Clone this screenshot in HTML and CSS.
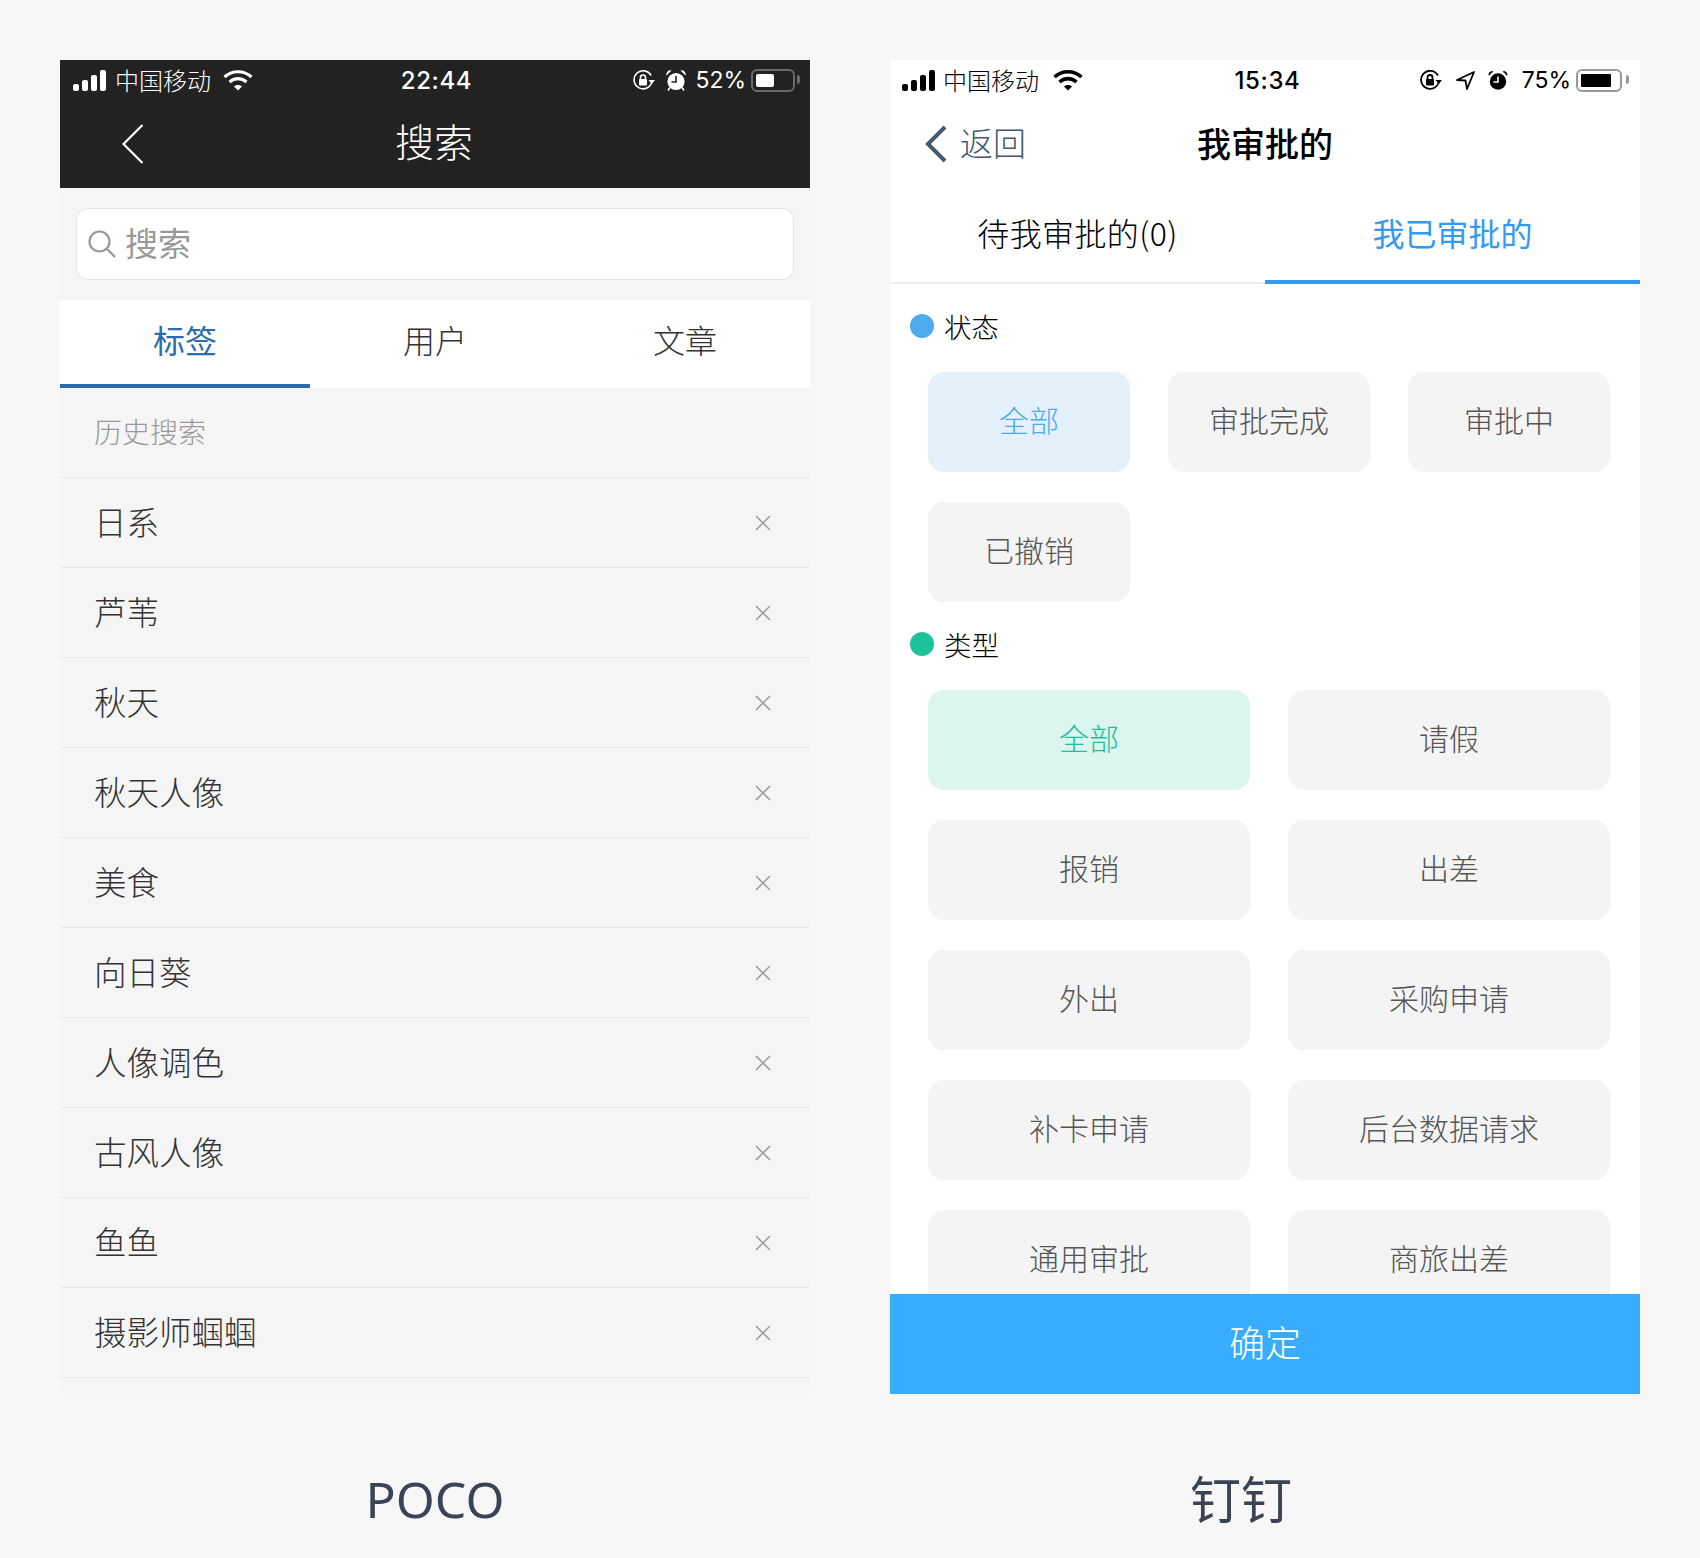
FILE: index.html
```html
<!DOCTYPE html>
<html lang="zh-CN">
<head>
    <meta charset="UTF-8">
    <meta name="viewport" content="width=device-width, initial-scale=1.0">
    <title>POCO / 钉钉</title>
    <link rel="stylesheet" href="styles.css">
</head>
<body>
    <div class="page">
        <!-- POCO -->
        <div class="column">
            <div class="phone phone-poco">
                <div class="header-dark">
                    <div class="statusbar">
                        <div class="status-left">
                            <svg class="signal" viewBox="0 0 33 21" fill="currentColor"><rect x="0" y="14" width="6" height="7" rx="2"/><rect x="9" y="10" width="6" height="11" rx="2"/><rect x="18" y="5" width="6" height="16" rx="2"/><rect x="27" y="0" width="6" height="21" rx="2"/></svg>
                            <span class="carrier">中国移动</span>
                            <svg class="wifi" viewBox="0 0 30 22" fill="none" stroke="currentColor" stroke-width="3.2"><path d="M1.5 8 C9 1 21 1 28.500 8"/><path d="M6.500 13 C11.500 8.500 18.500 8.500 23.500 13"/><path d="M11 17.500 L15 21.500 L19 17.500 C17 15.500 13 15.500 11 17.500 Z" fill="currentColor" stroke="none"/></svg>
                        </div>
                        <div class="time">22:44</div>
                        <div class="status-right">
                            <svg class="lock" viewBox="0 0 22 20" fill="none" stroke="currentColor" stroke-width="1.600"><path d="M18 5.500 A9 9 0 1 0 19 11"/><path d="M15.500 10 L22 10 L18.800 14 Z" fill="currentColor" stroke="none"/><rect x="6" y="9" width="8" height="6.500" rx="1" fill="currentColor" stroke="none"/><path d="M7.500 9.500 V7.500 A2.500 2.500 0 0 1 12.500 7.500 V9.500"/></svg>
                            <svg class="alarm" viewBox="0 0 20 21" fill="currentColor"><circle cx="10" cy="11.500" r="8.600"/><path d="M0.500 5.500 A4 4 0 0 1 5.500 0.500 Z M19.500 5.500 A4 4 0 0 0 14.500 0.500 Z"/><path d="M4 17.500 L2 20.500 M16 17.500 L18 20.500" stroke="currentColor" stroke-width="1.600"/><path d="M10 6 V12 H5.500" fill="none" stroke="#222" stroke-width="1.600"/></svg>
                            <span class="percent">52%</span>
                            <div class="battery battery-dark"><div class="battery-fill fill-52"></div></div>
                        </div>
                    </div>
                    <div class="navbar-dark">
                        <svg class="back-thin" viewBox="0 0 22 40" fill="none" stroke="currentColor" stroke-width="2.200"><path d="M20.500 1 L1.500 20 L20.500 39"/></svg>
                        <span class="title-dark">搜索</span>
                    </div>
                </div>

                <div class="searchbox">
                    <svg class="search-icon" viewBox="0 0 28 28" fill="none" stroke="#999" stroke-width="2.200"><circle cx="11.500" cy="11.500" r="10"/><path d="M19 19 L27 27"/></svg>
                    <span>搜索</span>
                </div>

                <div class="poco-tabs">
                    <div class="poco-tab active">标签</div>
                    <div class="poco-tab">用户</div>
                    <div class="poco-tab">文章</div>
                </div>

                <div class="history-title">历史搜索</div>
                <ul class="history">
                    <li><span>日系</span><svg class="close" viewBox="0 0 16 16"><path d="M1 1 L15 15 M15 1 L1 15"/></svg></li>
                    <li><span>芦苇</span><svg class="close" viewBox="0 0 16 16"><path d="M1 1 L15 15 M15 1 L1 15"/></svg></li>
                    <li><span>秋天</span><svg class="close" viewBox="0 0 16 16"><path d="M1 1 L15 15 M15 1 L1 15"/></svg></li>
                    <li><span>秋天人像</span><svg class="close" viewBox="0 0 16 16"><path d="M1 1 L15 15 M15 1 L1 15"/></svg></li>
                    <li><span>美食</span><svg class="close" viewBox="0 0 16 16"><path d="M1 1 L15 15 M15 1 L1 15"/></svg></li>
                    <li><span>向日葵</span><svg class="close" viewBox="0 0 16 16"><path d="M1 1 L15 15 M15 1 L1 15"/></svg></li>
                    <li><span>人像调色</span><svg class="close" viewBox="0 0 16 16"><path d="M1 1 L15 15 M15 1 L1 15"/></svg></li>
                    <li><span>古风人像</span><svg class="close" viewBox="0 0 16 16"><path d="M1 1 L15 15 M15 1 L1 15"/></svg></li>
                    <li><span>鱼鱼</span><svg class="close" viewBox="0 0 16 16"><path d="M1 1 L15 15 M15 1 L1 15"/></svg></li>
                    <li><span>摄影师蝈蝈</span><svg class="close" viewBox="0 0 16 16"><path d="M1 1 L15 15 M15 1 L1 15"/></svg></li>
                </ul>
            </div>
            <div class="caption">POCO</div>
        </div>

        <!-- DingTalk -->
        <div class="column">
            <div class="phone phone-ding">
                <div class="statusbar statusbar-light">
                    <div class="status-left">
                        <svg class="signal" viewBox="0 0 33 21" fill="currentColor"><rect x="0" y="14" width="6" height="7" rx="2"/><rect x="9" y="10" width="6" height="11" rx="2"/><rect x="18" y="5" width="6" height="16" rx="2"/><rect x="27" y="0" width="6" height="21" rx="2"/></svg>
                        <span class="carrier">中国移动</span>
                        <svg class="wifi wifi-ding" viewBox="0 0 30 22" fill="none" stroke="currentColor" stroke-width="3.600"><path d="M1.500 8 C9 1 21 1 28.500 8"/><path d="M6.500 13 C11.500 8.500 18.500 8.500 23.500 13"/><path d="M11 17.500 L15 21.500 L19 17.500 C17 15.500 13 15.500 11 17.500 Z" fill="currentColor" stroke="none"/></svg>
                    </div>
                    <div class="time">15:34</div>
                    <div class="status-right">
                        <svg class="lock" viewBox="0 0 22 20" fill="none" stroke="currentColor" stroke-width="1.800"><path d="M18 5.500 A9 9 0 1 0 19 11"/><path d="M15.500 10 L22 10 L18.800 14 Z" fill="currentColor" stroke="none"/><rect x="6" y="9" width="8" height="6.500" rx="1" fill="currentColor" stroke="none"/><path d="M7.500 9.500 V7.500 A2.500 2.500 0 0 1 12.500 7.500 V9.500"/></svg>
                        <svg class="location" viewBox="0 0 19 19" fill="none" stroke="currentColor" stroke-width="1.800" stroke-linejoin="round"><path d="M18 1 L1 9 L9.500 9.500 L11 18 Z"/></svg>
                        <svg class="alarm" viewBox="0 0 20 21" fill="currentColor"><circle cx="10" cy="11.500" r="8.200"/><path d="M0.500 5 A4 4 0 0 1 5 1 L4.500 2.500 A3 3 0 0 0 2 5.500 Z M19.500 5 A4 4 0 0 0 15 1 L15.500 2.500 A3 3 0 0 1 18 5.500 Z"/><path d="M10 6.500 V12 H5.500" fill="none" stroke="#fff" stroke-width="1.600"/></svg>
                        <span class="percent">75%</span>
                        <div class="battery battery-light"><div class="battery-fill fill-75"></div></div>
                    </div>
                </div>

                <div class="navbar-light">
                    <div class="nav-back">
                        <svg class="back-bold" viewBox="0 0 22 38" fill="none" stroke="currentColor" stroke-width="4"><path d="M20 2 L3 19 L20 36"/></svg>
                        <span>返回</span>
                    </div>
                    <span class="title-light">我审批的</span>
                </div>

                <div class="ding-tabs">
                    <div class="ding-tab">待我审批的(0)</div>
                    <div class="ding-tab active">我已审批的</div>
                </div>

                <div class="filters">
                    <div class="section-head first"><i class="dot dot-blue"></i>状态</div>
                    <div class="chips chips-3">
                        <div class="chip chip-blue">全部</div>
                        <div class="chip">审批完成</div>
                        <div class="chip">审批中</div>
                        <div class="chip">已撤销</div>
                    </div>

                    <div class="section-head"><i class="dot dot-green"></i>类型</div>
                    <div class="chips chips-2">
                        <div class="chip chip-green">全部</div>
                        <div class="chip">请假</div>
                        <div class="chip">报销</div>
                        <div class="chip">出差</div>
                        <div class="chip">外出</div>
                        <div class="chip">采购申请</div>
                        <div class="chip">补卡申请</div>
                        <div class="chip">后台数据请求</div>
                        <div class="chip">通用审批</div>
                        <div class="chip">商旅出差</div>
                    </div>
                </div>

                <div class="confirm">确定</div>
            </div>
            <div class="caption caption-ding">钉钉</div>
        </div>
    </div>
</body>
</html>
```

FILE: styles.css
```css
* {
    box-sizing: border-box;
}

html, body {
    margin: 0;
    padding: 0;
}

body {
    background: #f7f7f7;
    font-family: "Noto Sans CJK SC", "Noto Sans", sans-serif;
    color: #333;
}

.page {
    display: flex;
    gap: 80px;
    width: 1700px;
    height: 1558px;
    padding: 60px 60px 0;
    overflow: hidden;
}

.column {
    width: 750px;
}

.phone {
    display: flex;
    flex-direction: column;
    width: 750px;
    height: 1334px;
}

.caption {
    height: 116px;
    margin-top: 48px;
    text-align: center;
    font-family: "Noto Sans", "Noto Sans CJK SC", sans-serif;
    font-size: 50px;
    line-height: 114px;
    color: #3b4356;
}

.caption-ding {
    padding-right: 48px;
    font-size: 51px;
}

/* status bar */
.statusbar {
    display: grid;
    grid-template-columns: 1fr auto 1fr;
    align-items: center;
    height: 40px;
    padding: 0 15px 0 13px;
    color: #fff;
    font-size: 24px;
}

.statusbar-light {
    padding: 0 18px 0 12px;
    color: #000;
}

.status-left,
.status-right {
    display: flex;
    align-items: center;
}

.status-right {
    justify-content: flex-end;
}

.signal {
    width: 33px;
    height: 21px;
    margin-right: 9px;
}

.phone-ding .signal {
    margin-right: 8px;
}

.carrier {
    font-size: 24px;
    line-height: 30px;
    font-weight: 300;
}

.wifi {
    width: 30px;
    height: 22px;
    margin-left: 12px;
}

.wifi-ding {
    margin-left: 14px;
}

.time {
    padding-left: 5px;
    font-family: Inter, "Noto Sans", sans-serif;
    font-size: 24px;
    font-weight: 500;
    letter-spacing: 0.600px;
}

.statusbar-light .time {
    padding-left: 11px;
}

.lock {
    width: 22px;
    height: 20px;
}

.location {
    width: 19px;
    height: 19px;
    margin-left: 14px;
}

.alarm {
    width: 20px;
    height: 21px;
    margin-left: 11px;
}

.phone-ding .alarm {
    margin-left: 13px;
}

.percent {
    font-family: Inter, "Noto Sans", sans-serif;
    font-size: 23px;
    font-weight: 400;
    margin-left: 9px;
    margin-right: 5px;
}

.phone-ding .percent {
    margin-left: 14px;
    margin-right: 5px;
}

.battery {
    position: relative;
    width: 44px;
    height: 23px;
    padding: 3px;
    border: 2px solid #6b6b6b;
    border-radius: 6px;
}

.battery::after {
    content: "";
    position: absolute;
    right: -7px;
    top: 4px;
    width: 3px;
    height: 9px;
    border-radius: 0 3px 3px 0;
    background: #6b6b6b;
}

.battery-light {
    width: 46px;
    border-color: #999;
}

.battery-light::after {
    right: -9px;
    background: #999;
}

.battery-fill {
    height: 100%;
    background: #fff;
    border-radius: 2px;
}

.fill-52 {
    width: 18px;
}

.fill-75 {
    width: 30px;
    background: #000;
    border-radius: 1px;
}

/* poco */
.phone-poco {
    background: #f5f5f5;
}

.header-dark {
    background: #222;
    color: #fff;
}

.navbar-dark {
    position: relative;
    display: flex;
    align-items: center;
    justify-content: center;
    height: 88px;
    padding-right: 2px;
}

.back-thin {
    position: absolute;
    left: 62px;
    top: 24px;
    width: 22px;
    height: 40px;
}

.title-dark {
    font-size: 39px;
    font-weight: 300;
    line-height: 1;
    position: relative;
    top: -4px;
}

.searchbox {
    display: flex;
    align-items: center;
    height: 72px;
    margin: 20px 16px 20px;
    padding-left: 11px;
    padding-bottom: 5px;
    background: #fff;
    border: 1px solid #e4e4e4;
    border-radius: 12px;
    color: #999;
    font-size: 33px;
}

.search-icon {
    width: 28px;
    height: 28px;
    margin-right: 9px;
    margin-top: 5px;
}

.poco-tabs {
    display: flex;
    height: 88px;
    background: #fff;
}

.poco-tab {
    flex: 1;
    display: flex;
    align-items: center;
    justify-content: center;
    padding-bottom: 10px;
    font-size: 32px;
    font-weight: 300;
    color: #333;
}

.poco-tab.active {
    color: #2b6cb0;
    border-bottom: 4px solid #2b6cb0;
    padding-bottom: 6px;
    font-weight: 400;
}

.history-title {
    height: 90px;
    padding-left: 34px;
    line-height: 86px;
    font-size: 28px;
    font-weight: 300;
    color: #999;
    border-bottom: 1px solid #e8e8e8;
}

.history {
    list-style: none;
    margin: 0;
    padding: 0;
}

.history li {
    display: flex;
    align-items: center;
    justify-content: space-between;
    height: 90px;
    padding: 0 39px 0 34px;
    font-size: 32.500px;
    font-weight: 300;
    color: #333;
    border-bottom: 1px solid #e8e8e8;
}

.history li span {
    position: relative;
    top: -2px;
}

.close {
    width: 16px;
    height: 16px;
    fill: none;
    stroke: #999;
    stroke-width: 1.500;
}

/* dingtalk */
.phone-ding {
    background: #fff;
    overflow: hidden;
}

.navbar-light {
    position: relative;
    display: flex;
    align-items: center;
    justify-content: center;
    height: 90px;
    flex: none;
    padding-bottom: 6px;
}

.nav-back {
    position: absolute;
    left: 35px;
    top: 25px;
    display: flex;
    align-items: center;
    gap: 13px;
    color: #44596b;
    font-size: 33px;
    font-weight: 300;
    line-height: 38px;
}

.nav-back span {
    position: relative;
    top: -2px;
}

.back-bold {
    width: 22px;
    height: 38px;
}

.title-light {
    font-size: 34px;
    font-weight: 500;
    color: #000;
}

.ding-tabs {
    display: flex;
    flex: none;
    height: 94px;
    border-bottom: 2px solid #eee;
}

.ding-tab {
    flex: 1;
    height: 94px;
    line-height: 84px;
    text-align: center;
    font-size: 32px;
    font-weight: 300;
    color: #000;
    letter-spacing: 0.400px;
}

.ding-tab.active {
    color: #3399f3;
    border-bottom: 4px solid #3399f3;
    font-weight: 400;
    letter-spacing: 0;
}

.filters {
    flex: 1;
    min-height: 0;
    overflow: hidden;
}

.section-head {
    display: flex;
    align-items: center;
    gap: 10px;
    height: 44px;
    margin: 20px 0 24px;
    padding-left: 20px;
    font-size: 27.500px;
    font-weight: 300;
    color: #000;
}

.dot {
    width: 24px;
    height: 24px;
    border-radius: 50%;
}

.dot-blue {
    background: #4dabf0;
}

.dot-green {
    background: #1cc29a;
}

.chips {
    display: grid;
    row-gap: 30px;
    padding: 0 30px 0 38px;
}

.chips-3 {
    grid-template-columns: repeat(3, 202px);
    column-gap: 38px;
}

.chips-2 {
    grid-template-columns: repeat(2, 322px);
    column-gap: 38px;
}

.chip {
    height: 100px;
    line-height: 95px;
    text-align: center;
    background: #f4f4f4;
    border-radius: 16px;
    font-size: 30px;
    font-weight: 300;
    color: #555;
}

.chip-blue {
    background: #e4f1fb;
    color: #4dabf0;
}

.chip-green {
    background: #dcf5ee;
    color: #1cc09a;
}

.confirm {
    flex: none;
    height: 100px;
    line-height: 95px;
    text-align: center;
    background: #38adff;
    color: #fff;
    font-size: 36px;
    font-weight: 300;
}
```
